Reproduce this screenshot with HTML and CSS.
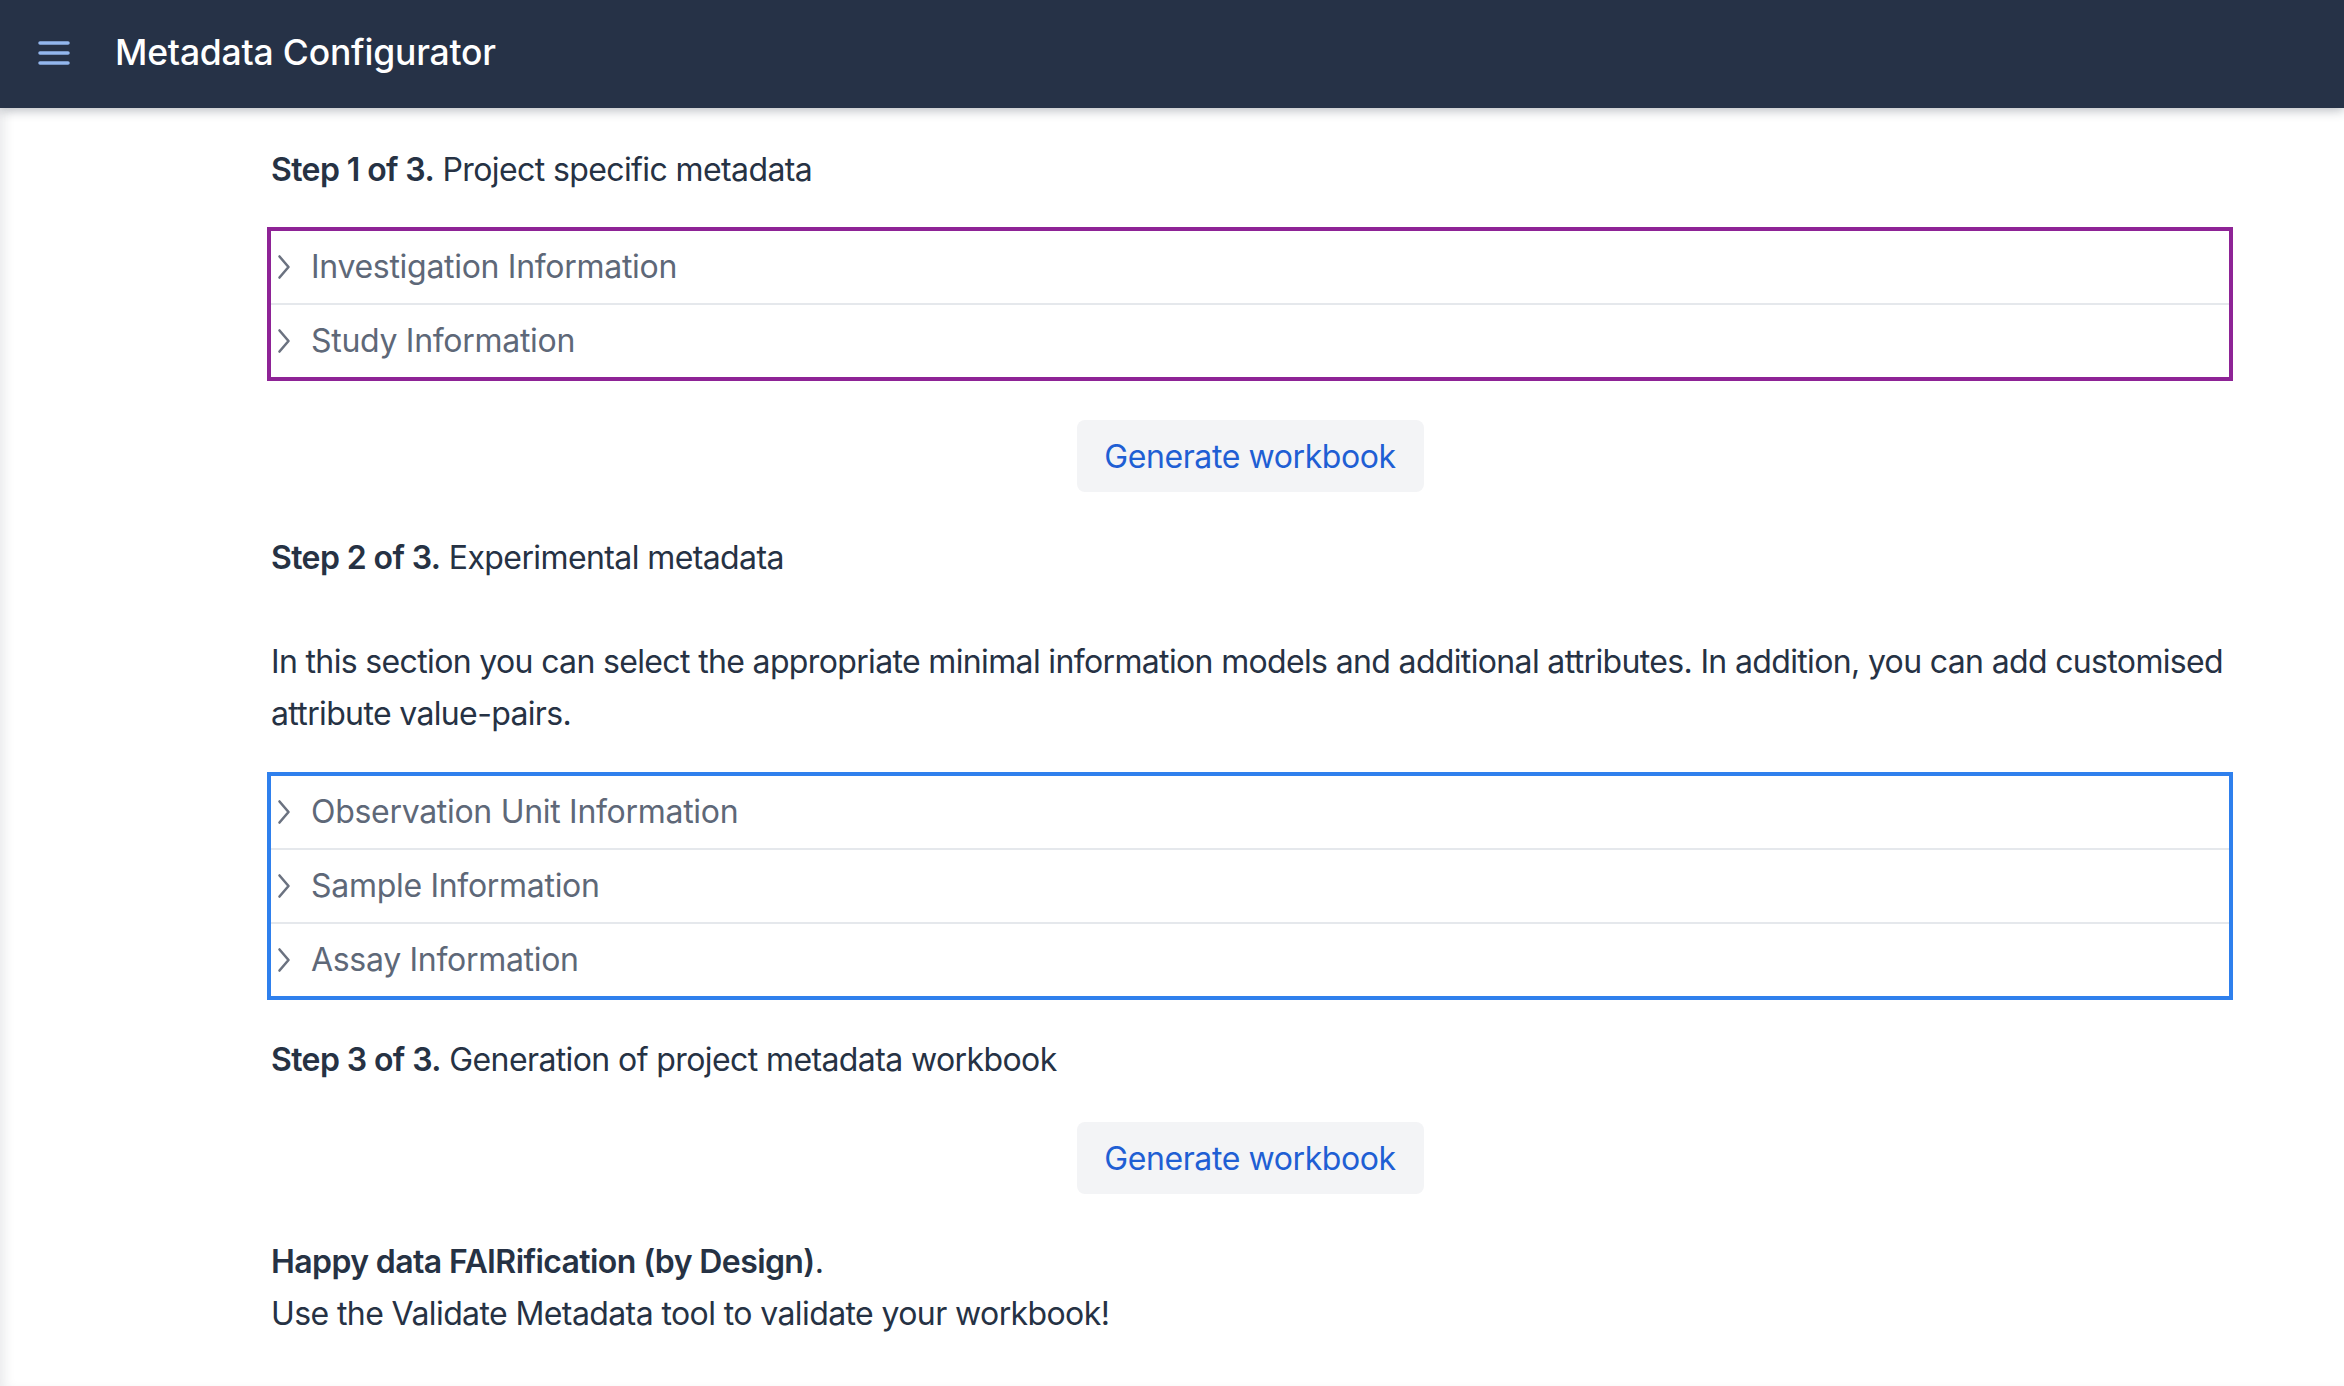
FILE: index.html
```html
<!DOCTYPE html>
<html lang="en">
<head>
<meta charset="utf-8">
<title>Metadata Configurator</title>
<link rel="stylesheet" href="styles.css">
</head>
<body>
<header class="topbar">
  <button class="menu-btn" aria-label="Menu">
    <svg width="32" height="24" viewBox="0 0 32 24"><path d="M2 2H30M2 12H30M2 22H30" stroke="#93b7ee" stroke-width="3.5" stroke-linecap="round" fill="none"/></svg>
  </button>
  <h1 class="app-title">Metadata Configurator</h1>
</header>
<main class="content">
  <p class="step step-1"><strong>Step 1 of 3.</strong> Project specific metadata</p>
  <div class="accordion accordion-purple">
    <div class="acc-row"><svg class="chev" width="14" height="26" viewBox="0 0 14 26"><path d="M2.5 2.5L11.5 13L2.5 23.5" fill="none" stroke="#6b7280" stroke-width="2.6" stroke-linecap="round" stroke-linejoin="round"/></svg><span>Investigation Information</span></div>
    <div class="acc-row"><svg class="chev" width="14" height="26" viewBox="0 0 14 26"><path d="M2.5 2.5L11.5 13L2.5 23.5" fill="none" stroke="#6b7280" stroke-width="2.6" stroke-linecap="round" stroke-linejoin="round"/></svg><span>Study Information</span></div>
  </div>
  <div class="btn-wrap btn-wrap-1"><button class="gen-btn">Generate workbook</button></div>
  <p class="step step-2"><strong>Step 2 of 3.</strong> Experimental metadata</p>
  <p class="desc">In this section you can select the appropriate minimal information models and additional attributes. In addition, you can add customised attribute value-pairs.</p>
  <div class="accordion accordion-blue">
    <div class="acc-row"><svg class="chev" width="14" height="26" viewBox="0 0 14 26"><path d="M2.5 2.5L11.5 13L2.5 23.5" fill="none" stroke="#6b7280" stroke-width="2.6" stroke-linecap="round" stroke-linejoin="round"/></svg><span>Observation Unit Information</span></div>
    <div class="acc-row"><svg class="chev" width="14" height="26" viewBox="0 0 14 26"><path d="M2.5 2.5L11.5 13L2.5 23.5" fill="none" stroke="#6b7280" stroke-width="2.6" stroke-linecap="round" stroke-linejoin="round"/></svg><span>Sample Information</span></div>
    <div class="acc-row"><svg class="chev" width="14" height="26" viewBox="0 0 14 26"><path d="M2.5 2.5L11.5 13L2.5 23.5" fill="none" stroke="#6b7280" stroke-width="2.6" stroke-linecap="round" stroke-linejoin="round"/></svg><span>Assay Information</span></div>
  </div>
  <p class="step step-3"><strong>Step 3 of 3.</strong> Generation of project metadata workbook</p>
  <div class="btn-wrap btn-wrap-2"><button class="gen-btn">Generate workbook</button></div>
  <p class="final"><strong>Happy data FAIRification (by Design)</strong>.<br>Use the Validate Metadata tool to validate your workbook!</p>
</main>
</body>
</html>
```
FILE: styles.css
```css
* { box-sizing: border-box; }
html, body { margin: 0; padding: 0; }
body {
  font-family: Inter, "Noto Sans", "Liberation Sans", sans-serif;
  color: #263244;
  background: #ffffff;
  height: 1386px;
  overflow: hidden;
  display: flex;
  flex-direction: column;
}
.topbar {
  height: 108px;
  flex: none;
  background: #263247;
  display: flex;
  align-items: center;
  padding-left: 38px;
  padding-bottom: 4px;
  box-shadow: 0 3px 10px rgba(30, 41, 59, 0.28);
  position: relative;
  z-index: 2;
}
.menu-btn {
  background: none;
  border: 0;
  padding: 0;
  width: 32px;
  height: 24px;
  display: flex;
  cursor: pointer;
  margin-top: 2px;
}
.app-title {
  margin: 0 0 0 45px;
  color: #ffffff;
  font-size: 35.5px;
  font-weight: 500;
  letter-spacing: -0.2px;
}
.content {
  flex: 1;
  padding: 36px 115px 0 271px;
  box-shadow: inset 10px 0 12px -6px rgba(30, 41, 59, 0.10);
  font-size: 32px;
  line-height: 52px;
  letter-spacing: -0.6px;
}
.content p { margin: 0; }
.content strong { font-weight: 600; }
.step-1 { margin-bottom: 31px !important; }
.accordion {
  border: 4px solid;
  margin: 0 -4px;
}
.accordion-purple { border-color: #8e2396; }
.accordion-blue { border-color: #2f80ed; }
.acc-row {
  box-sizing: content-box;
  height: 72px;
  display: flex;
  align-items: center;
  color: #5e6878;
  padding-left: 6px;
  letter-spacing: -0.3px;
}
.acc-row + .acc-row { border-top: 2px solid #e5e8ec; }
.acc-row .chev { flex: none; margin-right: 20px; }
.btn-wrap {
  display: flex;
  justify-content: center;
}
.btn-wrap-1 { margin: 39px 0 40px; }
.btn-wrap-2 { margin: 36px 0 42px; }
.gen-btn {
  font-family: inherit;
  width: 347px;
  height: 72px;
  background: #f3f4f6;
  border: 0;
  border-radius: 8px;
  color: #1f5fd4;
  font-size: 32px;
  font-weight: 400;
  letter-spacing: -0.4px;
  cursor: pointer;
}
.step-2 { margin-bottom: 52px !important; }
.desc {
  margin-bottom: 32px !important;
  margin-right: -14px !important;
  letter-spacing: -0.65px;
}
.step-3 { margin-top: 34px !important; }
```
